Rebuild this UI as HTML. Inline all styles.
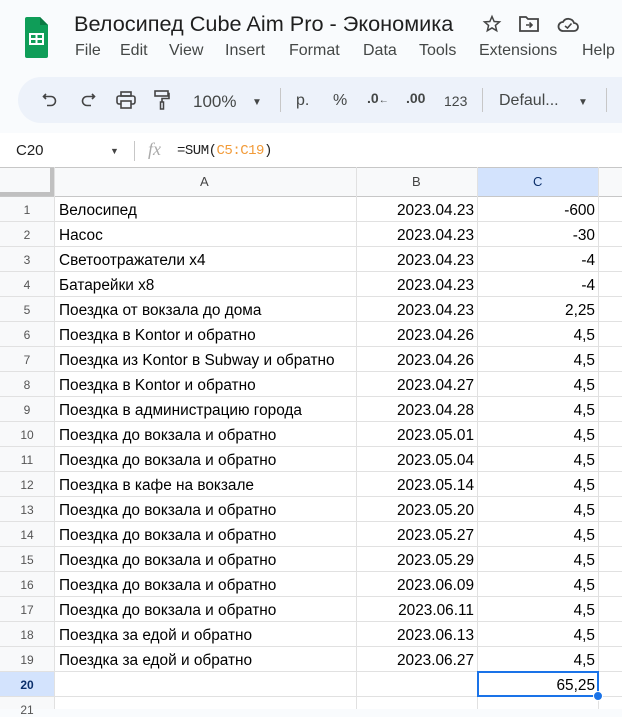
<!DOCTYPE html>
<html><head><meta charset="utf-8"><style>
*{margin:0;padding:0;box-sizing:border-box}
body{width:622px;height:709px;overflow:hidden;background:#f9fbfd;font-family:"Liberation Sans","DejaVu Sans",sans-serif;position:relative;color:#1f1f1f}
.a{position:absolute;white-space:nowrap}
.title{left:74px;top:11px;font-size:21.7px;color:#1f1f1f}
.menu{top:42px;font-size:16px;color:#444746}
.pill{left:18px;top:77px;width:640px;height:46px;border-radius:23px;background:#edf2fa}
.tb{top:92px;font-size:16px;color:#444746}
.fbar{left:0;top:133px;width:622px;height:34px;background:#fff}
.grid{left:0;top:167px;width:622px;height:542px;background:#fff}
.hl{position:absolute;height:1px;background:#e1e1e1;left:0;width:622px}
.vl{position:absolute;width:1px;background:#e1e1e1;top:167px;height:542px}
.rn{position:absolute;left:0;width:54px;text-align:center;font-size:12px;color:#555}
.c{position:absolute;font-size:15.4px;color:#000;height:24px;line-height:24px;margin-top:2px}
</style></head><body>
<svg class="a" style="left:25px;top:17px" width="23" height="41" viewBox="0 0 23 41"><path d="M2 0h13l8 8v31a2 2 0 0 1-2 2H2a2 2 0 0 1-2-2V2a2 2 0 0 1 2-2z" fill="#0f9d58"/><path d="M15 0v8h8z" fill="#0b7a43"/><rect x="5" y="17" width="13" height="10" fill="none" stroke="#fff" stroke-width="2"/><path d="M5 22h13M11.5 17v10" stroke="#fff" stroke-width="2"/></svg>
<div class="a title">Велосипед Cube Aim Pro - Экономика</div>
<svg class="a" style="left:482px;top:14px" width="20" height="20" viewBox="0 0 24 24"><path d="M12 3l2.6 6 6.4.5-4.9 4.2 1.5 6.3L12 16.7 6.4 20l1.5-6.3L3 9.5l6.4-.5z" fill="none" stroke="#444" stroke-width="1.8"/></svg>
<svg class="a" style="left:519px;top:15px" width="20" height="18" viewBox="0 0 20 18"><path d="M1 2h6l2 2h10v12H1z" fill="none" stroke="#444" stroke-width="1.8"/><path d="M7 10h6M10.5 7.5l2.5 2.5-2.5 2.5" fill="none" stroke="#444" stroke-width="1.6"/></svg>
<svg class="a" style="left:557px;top:15px" width="22" height="18" viewBox="0 0 22 18"><path d="M6 16h11a4 4 0 0 0 0-8 6 6 0 0 0-11-1A4.5 4.5 0 0 0 6 16z" fill="none" stroke="#444" stroke-width="1.8"/><path d="M8 11l2.5 2 4-4.5" fill="none" stroke="#444" stroke-width="1.6"/></svg>
<div class="a menu" style="left:75px">File</div>
<div class="a menu" style="left:120px">Edit</div>
<div class="a menu" style="left:169px">View</div>
<div class="a menu" style="left:225px">Insert</div>
<div class="a menu" style="left:289px">Format</div>
<div class="a menu" style="left:363px">Data</div>
<div class="a menu" style="left:419px">Tools</div>
<div class="a menu" style="left:479px">Extensions</div>
<div class="a menu" style="left:582px">Help</div>
<div class="a pill"></div>
<svg class="a" style="left:42px;top:92px" width="16" height="16" viewBox="0 0 16 16"><path d="M4 2L1.5 4.5 4 7M2 4.5h7a4.5 4.5 0 0 1 0 9H5" fill="none" stroke="#444" stroke-width="1.6"/></svg>
<svg class="a" style="left:80px;top:92px" width="16" height="16" viewBox="0 0 16 16"><path d="M12 2l2.5 2.5L12 7M14 4.5H7a4.5 4.5 0 0 0 0 9h4" fill="none" stroke="#444" stroke-width="1.6"/></svg>
<svg class="a" style="left:116px;top:91px" width="20" height="18" viewBox="0 0 20 18"><rect x="5" y="1" width="10" height="4" fill="none" stroke="#444" stroke-width="1.6"/><rect x="1" y="5" width="18" height="8" rx="2" fill="none" stroke="#444" stroke-width="1.6"/><rect x="5" y="10" width="10" height="7" fill="#edf2fa" stroke="#444" stroke-width="1.6"/></svg>
<svg class="a" style="left:154px;top:90px" width="16" height="20" viewBox="0 0 16 20"><rect x="1" y="1" width="13" height="5" fill="none" stroke="#444" stroke-width="1.6"/><path d="M14 3.5h1v5H8v4" fill="none" stroke="#444" stroke-width="1.6"/><rect x="6.5" y="12" width="3" height="7" fill="none" stroke="#444" stroke-width="1.5"/></svg>
<div class="a tb" style="left:193px;font-size:17px">100%</div>
<div class="a tb" style="left:252px;font-size:10px;top:97px">▼</div>
<div class="a" style="left:280px;top:88px;width:1px;height:24px;background:#c7c7c7"></div>
<div class="a tb" style="left:296px">р.</div>
<div class="a tb" style="left:333px">%</div>
<div class="a tb" style="left:367px;font-size:14px;font-weight:bold;top:90px">.0<span style="font-size:10px">←</span></div>
<div class="a tb" style="left:406px;font-size:14px;font-weight:bold;top:90px">.00</div>
<div class="a tb" style="left:444px;font-size:14px;top:93px">123</div>
<div class="a" style="left:482px;top:88px;width:1px;height:24px;background:#c7c7c7"></div>
<div class="a tb" style="left:499px">Defaul...</div>
<div class="a tb" style="left:578px;font-size:10px;top:97px">▼</div>
<div class="a" style="left:606px;top:88px;width:1px;height:24px;background:#c7c7c7"></div>
<div class="a fbar"></div>
<div class="a" style="left:16px;top:142px;font-size:15px">C20</div>
<div class="a" style="left:110px;top:146px;font-size:9px;color:#444">▼</div>
<div class="a" style="left:134px;top:141px;width:1px;height:20px;background:#c7c7c7"></div>
<div class="a" style="left:148px;top:139px;font-size:18px;font-style:italic;color:#aaa;font-family:'Liberation Serif',serif">fx</div>
<div class="a" style="left:177px;top:143px;font-size:14px;font-family:'Liberation Mono',monospace;letter-spacing:-0.5px">=SUM(<span style="color:#f29b39">C5:C19</span>)</div>
<div class="a grid"></div>
<div class="a" style="left:0;top:167px;width:622px;height:30px;background:#f8f9fa"></div>
<div class="a" style="left:478px;top:167px;width:121px;height:30px;background:#d3e3fd"></div>
<div class="a" style="left:0;top:672px;width:54px;height:25px;background:#d3e3fd"></div>
<div class="a" style="left:0;top:197px;width:54px;height:475px;background:#f8f9fa"></div>
<div class="a" style="left:0;top:697px;width:54px;height:12px;background:#f8f9fa"></div>
<div class="a" style="left:0;top:167px;width:622px;height:1px;background:#c7c7c7"></div>
<div class="a" style="left:0;top:168px;width:54px;height:28px;background:#f8f9fa;border-right:4px solid #c0c0c0;border-bottom:4px solid #c0c0c0"></div>
<div class="a" style="left:0;top:196px;width:622px;height:1px;background:#c7c7c7"></div>
<div class="vl" style="left:54px"></div><div class="vl" style="left:356px"></div><div class="vl" style="left:477px"></div><div class="vl" style="left:598px"></div>
<div class="a" style="left:200px;top:174px;font-size:13px;color:#444">A</div>
<div class="a" style="left:412px;top:174px;font-size:13px;color:#444">B</div>
<div class="a" style="left:533px;top:174px;font-size:13px;color:#0b2f6b">C</div>
<div class="hl" style="top:221px"></div><div class="hl" style="top:246px"></div><div class="hl" style="top:271px"></div><div class="hl" style="top:296px"></div><div class="hl" style="top:321px"></div><div class="hl" style="top:346px"></div><div class="hl" style="top:371px"></div><div class="hl" style="top:396px"></div><div class="hl" style="top:421px"></div><div class="hl" style="top:446px"></div><div class="hl" style="top:471px"></div><div class="hl" style="top:496px"></div><div class="hl" style="top:521px"></div><div class="hl" style="top:546px"></div><div class="hl" style="top:571px"></div><div class="hl" style="top:596px"></div><div class="hl" style="top:621px"></div><div class="hl" style="top:646px"></div><div class="hl" style="top:671px"></div><div class="hl" style="top:696px"></div>

<div class="rn" style="top:203px">1</div><div class="c" style="left:59px;top:197px">Велосипед</div><div class="c" style="left:357px;width:117px;text-align:right;top:197px">2023.04.23</div><div class="c" style="left:478px;width:117px;text-align:right;top:197px">-600</div>
<div class="rn" style="top:228px">2</div><div class="c" style="left:59px;top:222px">Насос</div><div class="c" style="left:357px;width:117px;text-align:right;top:222px">2023.04.23</div><div class="c" style="left:478px;width:117px;text-align:right;top:222px">-30</div>
<div class="rn" style="top:253px">3</div><div class="c" style="left:59px;top:247px">Светоотражатели x4</div><div class="c" style="left:357px;width:117px;text-align:right;top:247px">2023.04.23</div><div class="c" style="left:478px;width:117px;text-align:right;top:247px">-4</div>
<div class="rn" style="top:278px">4</div><div class="c" style="left:59px;top:272px">Батарейки x8</div><div class="c" style="left:357px;width:117px;text-align:right;top:272px">2023.04.23</div><div class="c" style="left:478px;width:117px;text-align:right;top:272px">-4</div>
<div class="rn" style="top:303px">5</div><div class="c" style="left:59px;top:297px">Поездка от вокзала до дома</div><div class="c" style="left:357px;width:117px;text-align:right;top:297px">2023.04.23</div><div class="c" style="left:478px;width:117px;text-align:right;top:297px">2,25</div>
<div class="rn" style="top:328px">6</div><div class="c" style="left:59px;top:322px">Поездка в Kontor и обратно</div><div class="c" style="left:357px;width:117px;text-align:right;top:322px">2023.04.26</div><div class="c" style="left:478px;width:117px;text-align:right;top:322px">4,5</div>
<div class="rn" style="top:353px">7</div><div class="c" style="left:59px;top:347px">Поездка из Kontor в Subway и обратно</div><div class="c" style="left:357px;width:117px;text-align:right;top:347px">2023.04.26</div><div class="c" style="left:478px;width:117px;text-align:right;top:347px">4,5</div>
<div class="rn" style="top:378px">8</div><div class="c" style="left:59px;top:372px">Поездка в Kontor и обратно</div><div class="c" style="left:357px;width:117px;text-align:right;top:372px">2023.04.27</div><div class="c" style="left:478px;width:117px;text-align:right;top:372px">4,5</div>
<div class="rn" style="top:403px">9</div><div class="c" style="left:59px;top:397px">Поездка в администрацию города</div><div class="c" style="left:357px;width:117px;text-align:right;top:397px">2023.04.28</div><div class="c" style="left:478px;width:117px;text-align:right;top:397px">4,5</div>
<div class="rn" style="top:428px">10</div><div class="c" style="left:59px;top:422px">Поездка до вокзала и обратно</div><div class="c" style="left:357px;width:117px;text-align:right;top:422px">2023.05.01</div><div class="c" style="left:478px;width:117px;text-align:right;top:422px">4,5</div>
<div class="rn" style="top:453px">11</div><div class="c" style="left:59px;top:447px">Поездка до вокзала и обратно</div><div class="c" style="left:357px;width:117px;text-align:right;top:447px">2023.05.04</div><div class="c" style="left:478px;width:117px;text-align:right;top:447px">4,5</div>
<div class="rn" style="top:478px">12</div><div class="c" style="left:59px;top:472px">Поездка в кафе на вокзале</div><div class="c" style="left:357px;width:117px;text-align:right;top:472px">2023.05.14</div><div class="c" style="left:478px;width:117px;text-align:right;top:472px">4,5</div>
<div class="rn" style="top:503px">13</div><div class="c" style="left:59px;top:497px">Поездка до вокзала и обратно</div><div class="c" style="left:357px;width:117px;text-align:right;top:497px">2023.05.20</div><div class="c" style="left:478px;width:117px;text-align:right;top:497px">4,5</div>
<div class="rn" style="top:528px">14</div><div class="c" style="left:59px;top:522px">Поездка до вокзала и обратно</div><div class="c" style="left:357px;width:117px;text-align:right;top:522px">2023.05.27</div><div class="c" style="left:478px;width:117px;text-align:right;top:522px">4,5</div>
<div class="rn" style="top:553px">15</div><div class="c" style="left:59px;top:547px">Поездка до вокзала и обратно</div><div class="c" style="left:357px;width:117px;text-align:right;top:547px">2023.05.29</div><div class="c" style="left:478px;width:117px;text-align:right;top:547px">4,5</div>
<div class="rn" style="top:578px">16</div><div class="c" style="left:59px;top:572px">Поездка до вокзала и обратно</div><div class="c" style="left:357px;width:117px;text-align:right;top:572px">2023.06.09</div><div class="c" style="left:478px;width:117px;text-align:right;top:572px">4,5</div>
<div class="rn" style="top:603px">17</div><div class="c" style="left:59px;top:597px">Поездка до вокзала и обратно</div><div class="c" style="left:357px;width:117px;text-align:right;top:597px">2023.06.11</div><div class="c" style="left:478px;width:117px;text-align:right;top:597px">4,5</div>
<div class="rn" style="top:628px">18</div><div class="c" style="left:59px;top:622px">Поездка за едой и обратно</div><div class="c" style="left:357px;width:117px;text-align:right;top:622px">2023.06.13</div><div class="c" style="left:478px;width:117px;text-align:right;top:622px">4,5</div>
<div class="rn" style="top:653px">19</div><div class="c" style="left:59px;top:647px">Поездка за едой и обратно</div><div class="c" style="left:357px;width:117px;text-align:right;top:647px">2023.06.27</div><div class="c" style="left:478px;width:117px;text-align:right;top:647px">4,5</div>
<div class="rn" style="top:678px;font-weight:bold;color:#0b2f6b">20</div>
<div class="a" style="left:477px;top:671px;width:122px;height:26px;border:2px solid #1a73e8"></div>
<div class="c" style="left:478px;width:117px;text-align:right;top:672px">65,25</div>
<div class="a" style="left:593px;top:691px;width:10px;height:10px;border-radius:50%;background:#1a73e8;border:1px solid #fff"></div>
<div class="rn" style="top:703px">21</div>
</body></html>
